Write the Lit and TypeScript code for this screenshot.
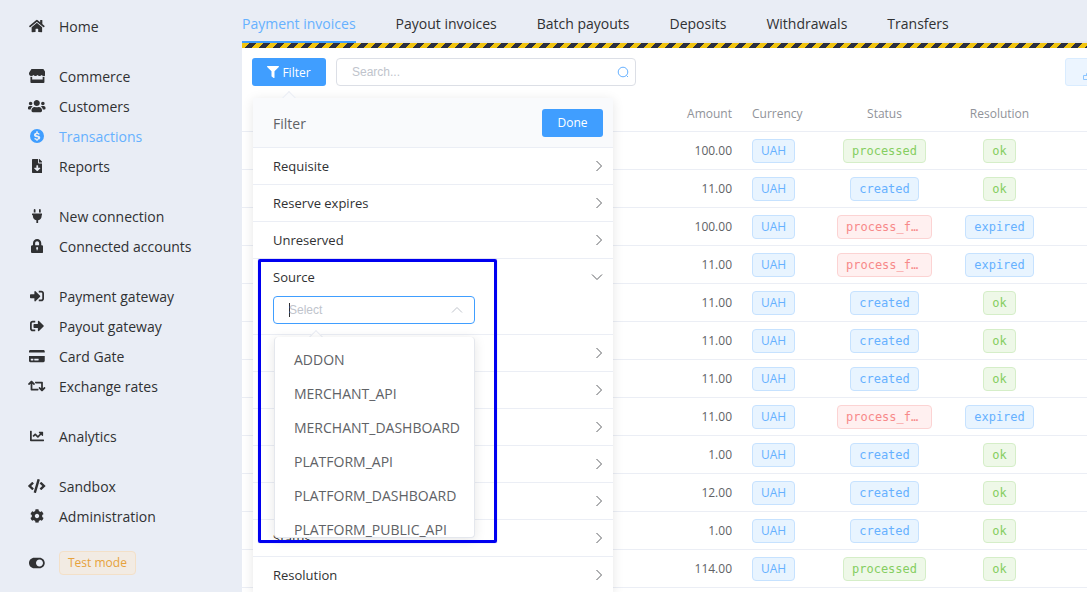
import { LitElement, html, css, svg } from 'lit';
import { customElement } from 'lit/decorators.js';

// FontAwesome style glyphs, [viewBox width, path]
const ICONS: Record<string, [number, string]> = {
  home: [576, 'M280.37 148.26L96 300.11V464a16 16 0 0 0 16 16l112.06-.29a16 16 0 0 0 15.92-16V368a16 16 0 0 1 16-16h64a16 16 0 0 1 16 16v95.64a16 16 0 0 0 16 16.05L464 480a16 16 0 0 0 16-16V300L295.67 148.26a12.19 12.19 0 0 0-15.3 0zM571.6 251.47L488 182.56V44.05a12 12 0 0 0-12-12h-56a12 12 0 0 0-12 12v72.61L318.47 43a48 48 0 0 0-61 0L4.34 251.47a12 12 0 0 0-1.6 16.9l25.5 31A12 12 0 0 0 45.15 301l235.22-193.74a12.19 12.19 0 0 1 15.3 0L530.9 301a12 12 0 0 0 16.9-1.6l25.5-31a12 12 0 0 0-1.7-16.93z'],
  store: [616, 'M602 118.6L537.1 15C531.3 5.7 521 0 510 0H106C95 0 84.7 5.7 78.9 15L14 118.6c-33.9 54.1-3.9 129.3 59.4 137.9 4.6.6 9.1.9 13.7.9 29.9 0 56.4-13.1 74.8-33.6 18.4 20.5 45 33.6 74.8 33.6 29.9 0 56.4-13.1 74.8-33.6 18.4 20.5 45 33.6 74.8 33.6 29.9 0 56.4-13.1 74.8-33.6 18.5 20.5 45 33.6 74.8 33.6 4.7 0 9.2-.3 13.7-.9 63.5-8.5 93.6-83.7 59.6-137.9zM529.5 288c-10 0-19.9-1.5-29.5-3.8V384H116v-99.8c-9.6 2.2-19.5 3.8-29.5 3.8-6 0-12.1-.4-18-1.2-5.6-.8-11.1-2.1-16.4-3.6V480c0 17.7 14.3 32 32 32h448c17.7 0 32-14.3 32-32V283.2c-5.4 1.6-10.8 2.9-16.4 3.6-6.1.8-12.1 1.2-18.2 1.2z'],
  users: [640, 'M96 224c35.3 0 64-28.7 64-64s-28.7-64-64-64-64 28.7-64 64 28.7 64 64 64zm448 0c35.3 0 64-28.7 64-64s-28.7-64-64-64-64 28.7-64 64 28.7 64 64 64zm32 32h-64c-17.6 0-33.5 7.1-45.1 18.6 40.3 22.1 68.9 62 75.1 109.4h66c17.7 0 32-14.3 32-32v-32c0-35.3-28.7-64-64-64zm-256 0c61.9 0 112-50.1 112-112S381.9 32 320 32 208 82.1 208 144s50.1 112 112 112zm76.8 32h-8.3c-20.8 10-43.9 16-68.5 16s-47.6-6-68.5-16h-8.3C179.6 288 128 339.6 128 403.2V432c0 26.5 21.5 48 48 48h288c26.5 0 48-21.5 48-48v-28.8c0-63.6-51.6-115.2-115.2-115.2zm-223.7-13.4C161.5 263.1 145.6 256 128 256H64c-35.3 0-64 28.7-64 64v32c0 17.7 14.3 32 32 32h65.9c6.3-47.4 34.9-87.3 75.2-109.4z'],
  file: [384, 'M224 136V0H24C10.7 0 0 10.7 0 24v464c0 13.3 10.7 24 24 24h336c13.3 0 24-10.7 24-24V160H248c-13.2 0-24-10.8-24-24zm76.45 211.36l-96.42 95.7c-6.65 6.61-17.39 6.61-24.04 0l-96.42-95.7C73.42 337.29 80.54 320 94.82 320H160v-80c0-8.84 7.16-16 16-16h32c8.84 0 16 7.16 16 16v80h65.18c14.28 0 21.4 17.29 11.27 27.36zM377 105L279.1 7c-4.5-4.5-10.6-7-17-7H256v128h128v-6.1c0-6.3-2.5-12.4-7-16.9z'],
  plug: [384, 'M320,32a32,32,0,0,0-64,0v96h64Zm48,128H16A16,16,0,0,0,0,176v32a16,16,0,0,0,16,16H32v32A160.07,160.07,0,0,0,160,412.8V512h64V412.8A160.07,160.07,0,0,0,352,256V224h16a16,16,0,0,0,16-16V176A16,16,0,0,0,368,160ZM128,32a32,32,0,0,0-64,0v96h64Z'],
  lock: [448, 'M400 224h-24v-72C376 68.2 307.8 0 224 0S72 68.2 72 152v72H48c-26.5 0-48 21.5-48 48v192c0 26.5 21.5 48 48 48h352c26.5 0 48-21.5 48-48V272c0-26.5-21.5-48-48-48zm-104 0H152v-72c0-39.7 32.3-72 72-72s72 32.3 72 72v72zM224 296a36 36 0 0 0-20 66v46h40v-46a36 36 0 0 0-20-66z'],
  signIn: [512, 'M416 448h-84c-6.6 0-12-5.4-12-12v-40c0-6.6 5.4-12 12-12h84c17.7 0 32-14.3 32-32V160c0-17.7-14.3-32-32-32h-84c-6.6 0-12-5.4-12-12V76c0-6.6 5.4-12 12-12h84c53 0 96 43 96 96v192c0 53-43 96-96 96zm-47-201L201 79c-15-15-41-4.5-41 17v96H24c-13.3 0-24 10.7-24 24v96c0 13.3 10.7 24 24 24h136v96c0 21.5 26 32 41 17l168-168c9.3-9.4 9.3-24.6 0-34z'],
  signOut: [512, 'M497 273L329 441c-15 15-41 4.5-41-17v-96H152c-13.3 0-24-10.7-24-24v-96c0-13.3 10.7-24 24-24h136V88c0-21.4 25.9-32 41-17l168 168c9.3 9.4 9.3 24.6 0 34zM192 436v-40c0-6.6-5.4-12-12-12H96c-17.7 0-32-14.3-32-32V160c0-17.7 14.3-32 32-32h84c6.6 0 12-5.4 12-12V76c0-6.6-5.4-12-12-12H96c-53 0-96 43-96 96v192c0 53 43 96 96 96h84c6.6 0 12-5.4 12-12z'],
  card: [576, 'M0 432c0 26.5 21.5 48 48 48h480c26.5 0 48-21.5 48-48V256H0v176zm192-68c0-6.6 5.4-12 12-12h136c6.6 0 12 5.4 12 12v40c0 6.6-5.4 12-12 12H204c-6.6 0-12-5.4-12-12v-40zm-128 0c0-6.6 5.4-12 12-12h72c6.6 0 12 5.4 12 12v40c0 6.6-5.4 12-12 12H76c-6.6 0-12-5.4-12-12v-40zM576 80v48H0V80c0-26.5 21.5-48 48-48h480c26.5 0 48 21.5 48 48z'],
  retweet: [640, 'M629.657 343.598L528.971 444.284c-9.373 9.372-24.568 9.372-33.941 0L394.343 343.598c-9.373-9.373-9.373-24.569 0-33.941l10.823-10.823c9.562-9.562 25.133-9.34 34.419.492L480 342.118V160H292.451a24.005 24.005 0 0 1-16.971-7.029l-16-16C244.361 121.851 255.069 96 276.451 96H520c13.255 0 24 10.745 24 24v222.118l40.416-42.792c9.285-9.831 24.856-10.054 34.419-.492l10.823 10.823c9.372 9.372 9.372 24.569-.001 33.941zm-265.138 15.431A23.999 23.999 0 0 0 347.548 352H160V169.881l40.416 42.792c9.286 9.831 24.856 10.054 34.419.491l10.822-10.822c9.373-9.373 9.373-24.569 0-33.941L144.971 67.716c-9.373-9.373-24.569-9.373-33.941 0L10.343 168.402c-9.373 9.373-9.373 24.569 0 33.941l10.822 10.822c9.562 9.562 25.133 9.34 34.419-.491L96 169.881V392c0 13.255 10.745 24 24 24h243.549c21.382 0 32.09-25.851 16.971-40.971l-16.001-16z'],
  chart: [512, 'M496 384H64V80c0-8.84-7.16-16-16-16H16C7.16 64 0 71.16 0 80v336c0 17.67 14.33 32 32 32h464c8.84 0 16-7.16 16-16v-32c0-8.84-7.16-16-16-16zM464 96H345.94c-21.38 0-32.09 25.85-16.97 40.97l32.4 32.4L288 242.75l-73.37-73.37c-12.5-12.5-32.76-12.5-45.25 0l-68.69 68.69c-6.25 6.25-6.25 16.38 0 22.63l22.62 22.62c6.25 6.25 16.38 6.25 22.63 0L192 237.25l73.37 73.37c12.5 12.5 32.76 12.5 45.25 0l96-96 32.4 32.4c15.12 15.12 40.97 4.41 40.97-16.97V112c.01-8.84-7.15-16-15.99-16z'],
  code: [640, 'M278.9 511.5l-61-17.7c-6.4-1.8-10-8.5-8.2-14.9L346.2 8.7c1.8-6.4 8.5-10 14.9-8.2l61 17.7c6.4 1.8 10 8.5 8.2 14.9L293.8 503.3c-1.9 6.4-8.5 10.1-14.9 8.2zm-114-112.2l43.5-46.4c4.6-4.9 4.3-12.7-.8-17.2L117 256l90.6-79.7c5.1-4.5 5.5-12.3.8-17.2l-43.5-46.4c-4.5-4.8-12.1-5.1-17-.5L3.8 247.2c-5.1 4.7-5.1 12.8 0 17.5l144.1 135.1c4.9 4.6 12.5 4.4 17-.5zm327.2.6l144.1-135.1c5.1-4.7 5.1-12.8 0-17.5L492.1 112.1c-4.8-4.5-12.4-4.3-17 .5L431.6 159c-4.6 4.9-4.3 12.7.8 17.2L523 256l-90.6 79.7c-5.1 4.5-5.5 12.3-.8 17.2l43.5 46.4c4.5 4.9 12.1 5.1 17 .6z'],
  cog: [512, 'M487.4 315.7l-42.6-24.6c4.3-23.2 4.3-47 0-70.2l42.6-24.6c4.9-2.8 7.1-8.6 5.5-14-11.1-35.6-30-67.8-54.7-94.6-3.8-4.1-10-5.1-14.8-2.3L380.8 110c-17.9-15.4-38.5-27.3-60.8-35.1V25.8c0-5.6-3.9-10.5-9.4-11.7-36.7-8.2-74.3-7.8-109.2 0-5.5 1.2-9.4 6.1-9.4 11.7V75c-22.2 7.9-42.8 19.8-60.8 35.1L88.7 85.5c-4.9-2.8-11-1.9-14.8 2.3-24.7 26.7-43.6 58.9-54.7 94.6-1.7 5.4.6 11.2 5.5 14L67.3 221c-4.3 23.2-4.3 47 0 70.2l-42.6 24.6c-4.9 2.8-7.1 8.6-5.5 14 11.1 35.6 30 67.8 54.7 94.6 3.8 4.1 10 5.1 14.8 2.3l42.6-24.6c17.9 15.4 38.5 27.3 60.8 35.1v49.2c0 5.6 3.9 10.5 9.4 11.7 36.7 8.2 74.3 7.8 109.2 0 5.5-1.2 9.4-6.1 9.4-11.7v-49.2c22.2-7.9 42.8-19.8 60.8-35.1l42.6 24.6c4.9 2.8 11 1.9 14.8-2.3 24.7-26.7 43.6-58.9 54.7-94.6 1.5-5.5-.7-11.3-5.6-14.1zM256 336c-44.1 0-80-35.9-80-80s35.9-80 80-80 80 35.9 80 80-35.9 80-80 80z'],
  toggle: [576, 'M384 64H192C86 64 0 150 0 256s86 192 192 192h192c106 0 192-86 192-192S490 64 384 64zm0 320c-70.8 0-128-57.3-128-128 0-70.8 57.3-128 128-128 70.8 0 128 57.3 128 128 0 70.8-57.3 128-128 128z'],
  filter: [512, 'M487.976 0H24.028C2.71 0-8.047 25.866 7.058 40.971L192 225.941V432c0 7.831 3.821 15.17 10.237 19.662l80 55.98C298.02 518.69 320 507.493 320 487.98V225.941l184.947-184.97C520.021 25.896 509.338 0 487.976 0z'],
  dollar: [512, 'M256 0a256 256 0 1 0 0 512 256 256 0 0 0 0-512zm28 397v31h-56v-31c-38-3-69-22-78-52l52-16c5 15 21 24 40 24h26c17 0 28-10 28-24 0-12-8-19-25-24l-63-17c-37-10-62-35-62-72 0-38 32-69 82-75V84h56v57c36 4 64 24 74 52l-52 16c-5-14-19-22-36-22h-22c-17 0-26 9-26 21 0 10 7 16 22 20l66 18c40 11 64 36 64 76 0 40-33 70-90 75z'],
};

const icon = (name: string, size = 14, color = 'currentColor') => {
  const [w, d] = ICONS[name];
  return html`<svg width=${(w / 512) * size} height=${size} viewBox="0 0 ${w} 512" fill=${color} fill-rule="evenodd">${svg`<path d=${d}></path>`}</svg>`;
};

const chevron = (dir: 'right' | 'down' | 'up', color = '#606266') => {
  const pts = { right: 'M1.5 1l5 5-5 5', down: 'M1 1.5l5 5 5-5', up: 'M1 6.5l5-5 5 5' }[dir];
  const [w, h] = dir === 'right' ? [8, 12] : [12, 8];
  return html`<svg width=${w} height=${h} viewBox="0 0 ${w} ${h}" fill="none" stroke=${color} stroke-width="1">${svg`<path d=${pts}></path>`}</svg>`;
};

const NAV = [
  [['home', 'Home']],
  [['store', 'Commerce'], ['users', 'Customers'], ['dollar', 'Transactions'], ['file', 'Reports']],
  [['plug', 'New connection'], ['lock', 'Connected accounts']],
  [['signIn', 'Payment gateway'], ['signOut', 'Payout gateway'], ['card', 'Card Gate'], ['retweet', 'Exchange rates']],
  [['chart', 'Analytics']],
  [['code', 'Sandbox'], ['cog', 'Administration']],
];

const TABS = ['Payment invoices', 'Payout invoices', 'Batch payouts', 'Deposits', 'Withdrawals', 'Transfers'];

const ROWS: [string, string, string][] = [
  ['100.00', 'processed', 'ok'],
  ['11.00', 'created', 'ok'],
  ['100.00', 'process_failed', 'expired'],
  ['11.00', 'process_failed', 'expired'],
  ['11.00', 'created', 'ok'],
  ['11.00', 'created', 'ok'],
  ['11.00', 'created', 'ok'],
  ['11.00', 'process_failed', 'expired'],
  ['1.00', 'created', 'ok'],
  ['12.00', 'created', 'ok'],
  ['1.00', 'created', 'ok'],
  ['114.00', 'processed', 'ok'],
];

const TONE: Record<string, string> = {
  processed: 'green',
  ok: 'green',
  created: 'blue',
  expired: 'blue',
  process_failed: 'red',
};

const OPTIONS = ['ADDON', 'MERCHANT_API', 'MERCHANT_DASHBOARD', 'PLATFORM_API', 'PLATFORM_DASHBOARD', 'PLATFORM_PUBLIC_API'];

@customElement('app-root')
export class AppRoot extends LitElement {
  static styles = css`
    :host {
      display: flex;
      position: relative;
      width: 1087px;
      height: 592px;
      overflow: hidden;
      background: #e9edf5;
      font-family: 'Open Sans', sans-serif;
      color: #303133;
    }

    .sidebar {
      flex: 0 0 242px;
      padding-top: 11px;
      box-sizing: border-box;
    }
    .group {
      margin-bottom: 20px;
    }
    .item {
      display: flex;
      align-items: center;
      height: 30px;
      font-size: 14px;
    }
    .item.active {
      color: #66b1ff;
    }
    .item.active svg {
      color: #409eff;
    }
    .item.mode {
      height: 24px;
      margin-top: 1px;
    }
    .ico {
      flex: 0 0 18px;
      margin: 0 13px 0 28px;
      display: flex;
      justify-content: center;
      align-items: center;
    }
    .test {
      height: 24px;
      line-height: 22px;
      box-sizing: border-box;
      padding: 0 8px;
      font-size: 12px;
      color: #e6a23c;
      background: #f2ebe3;
      border: 1px solid #f3e0c8;
      border-radius: 4px;
    }

    .content {
      flex: 1;
      min-width: 0;
      display: flex;
      flex-direction: column;
    }
    .tabs {
      display: flex;
      height: 43px;
      box-sizing: border-box;
      box-shadow: inset 0 -2px 0 #e4e7ed;
    }
    .tab {
      margin-right: 40px;
      height: 43px;
      line-height: 48px;
      box-sizing: border-box;
      font-size: 14px;
    }
    .tab.active {
      color: #66b1ff;
      border-bottom: 2px solid #409eff;
    }
    .stripe {
      height: 5px;
      background: repeating-linear-gradient(135deg, #f1c40f 0 4.95px, #2c3040 4.95px 9.9px);
    }

    .main {
      position: relative;
      flex: 1;
      background: #fff;
      overflow: hidden;
    }
    .toolbar {
      display: flex;
      gap: 10px;
      padding: 10px 10px 8px;
    }
    .btn {
      height: 28px;
      box-sizing: border-box;
      display: flex;
      align-items: center;
      justify-content: center;
      gap: 3px;
      background: #409eff;
      color: #fff;
      font-size: 12px;
      border-radius: 3px;
    }
    .btn.filter {
      width: 74px;
    }
    .search {
      width: 300px;
      height: 28px;
      box-sizing: border-box;
      display: flex;
      align-items: center;
      justify-content: space-between;
      padding: 0 5px 0 15px;
      border: 1px solid #dcdfe6;
      border-radius: 4px;
      font: 12px 'Liberation Sans', sans-serif;
      color: #c0c4cc;
    }
    .export {
      flex: 0 0 60px;
      margin: 0 -48px 0 auto;
      height: 28px;
      box-sizing: border-box;
      padding: 6px 0 0 16px;
      background: #ecf5ff;
      border: 1px solid #d9ecff;
      border-radius: 3px;
    }

    .row {
      display: grid;
      grid-template-columns: 500px 82px 121px 109px 1fr;
      align-items: center;
      height: 38px;
      box-sizing: border-box;
      border-bottom: 1px solid #ebeef5;
      font-size: 12px;
      color: #606266;
    }
    .row.head {
      padding-top: 1px;
      color: #909399;
      font-weight: 500;
    }
    .amount {
      text-align: right;
      padding-right: 10px;
    }
    .currency {
      display: flex;
      padding-left: 10px;
    }
    .mid {
      display: flex;
      justify-content: center;
    }
    .tag {
      display: inline-block;
      height: 24px;
      line-height: 22px;
      box-sizing: border-box;
      padding: 0 8px;
      border: 1px solid;
      border-radius: 4px;
      white-space: nowrap;
      overflow: hidden;
      text-overflow: ellipsis;
      font-size: 12px;
    }
    .tag.code {
      font-family: 'DejaVu Sans Mono', monospace;
      max-width: 95px;
    }
    .tag.blue {
      color: #66b1ff;
      background: #e8f4ff;
      border-color: #c6e2ff;
    }
    .tag.green {
      color: #85ce61;
      background: #eef8e8;
      border-color: #d5eec8;
    }
    .tag.red {
      color: #f78989;
      background: #fff0f0;
      border-color: #fcd3d3;
    }

    .popover {
      position: absolute;
      left: 11px;
      top: 50px;
      width: 360px;
      background: #fff;
      box-shadow: 0 2px 12px rgba(0, 0, 0, 0.1);
      border-radius: 2px;
    }
    .popover::before {
      content: '';
      position: absolute;
      left: 31px;
      top: -5px;
      width: 10px;
      height: 10px;
      box-sizing: border-box;
      background: #f9fafc;
      border: 1px solid #ebeef5;
      border-right: 0;
      border-bottom: 0;
      transform: rotate(45deg);
    }
    .pop-head {
      position: relative;
      display: flex;
      align-items: center;
      justify-content: space-between;
      height: 50px;
      box-sizing: border-box;
      padding: 0 10px 0 20px;
      background: #f9fafc;
      border-bottom: 1px solid #ebeef5;
      font-size: 14px;
      color: #606266;
    }
    .pop-title {
      padding-top: 2px;
    }
    .btn.done {
      width: 61px;
    }
    .section {
      border-bottom: 1px solid #ebeef5;
      padding: 0 10px 0 20px;
      font-size: 13px;
    }
    .section-head {
      display: flex;
      align-items: center;
      justify-content: space-between;
      height: 36px;
    }
    .select {
      display: flex;
      align-items: center;
      justify-content: space-between;
      width: 202px;
      height: 28px;
      box-sizing: border-box;
      margin: 1px 0 10px;
      padding: 0 11px 0 15px;
      border: 1px solid #409eff;
      border-radius: 4px;
      font: 12px 'Liberation Sans', sans-serif;
      color: #c0c4cc;
    }
    .caret {
      display: inline-block;
      width: 1px;
      height: 14px;
      margin-right: -1px;
      background: #303133;
      vertical-align: -3px;
    }
    .dropdown {
      position: absolute;
      left: 21px;
      top: 239px;
      width: 201px;
    }
    .dropdown::before {
      content: '';
      position: absolute;
      left: 37px;
      top: -5px;
      width: 10px;
      height: 10px;
      box-sizing: border-box;
      background: #fff;
      border: 1px solid #ebeef5;
      border-right: 0;
      border-bottom: 0;
      transform: rotate(45deg);
    }
    .options {
      position: relative;
      height: 201px;
      box-sizing: border-box;
      padding: 6px 0;
      overflow: hidden;
      background: #fff;
      border: 1px solid #e4e7ed;
      border-top: 0;
      border-radius: 4px;
      box-shadow: 0 2px 12px rgba(0, 0, 0, 0.1);
    }
    .option {
      height: 34px;
      line-height: 34px;
      padding-left: 19px;
      font-size: 14px;
      color: #606266;
      white-space: nowrap;
    }

    .highlight {
      position: absolute;
      left: 258px;
      top: 259px;
      width: 239px;
      height: 284px;
      box-sizing: border-box;
      border: 3px solid #0000f0;
      border-radius: 2px;
      box-shadow: 0 0 1px rgba(0, 0, 240, 0.5);
      pointer-events: none;
    }
  `;

  private renderSection(label: string) {
    return html`<div class="section">
      <div class="section-head"><span>${label}</span>${chevron('right')}</div>
    </div>`;
  }

  render() {
    return html`
      <aside class="sidebar">
        ${NAV.map(
          (group) => html`<div class="group">
            ${group.map(
              ([ic, label]) => html`<div class="item ${label === 'Transactions' ? 'active' : ''}">
                <span class="ico">${icon(ic)}</span>${label}
              </div>`
            )}
          </div>`
        )}
        <div class="item mode">
          <span class="ico">${icon('toggle')}</span>
          <span class="test">Test mode</span>
        </div>
      </aside>

      <section class="content">
        <nav class="tabs">
          ${TABS.map((t, i) => html`<div class="tab ${i === 0 ? 'active' : ''}">${t}</div>`)}
        </nav>
        <div class="stripe"></div>
        <div class="main">
          <div class="toolbar">
            <div class="btn filter">${icon('filter', 12, '#fff')}Filter</div>
            <div class="search">
              Search...
              <svg width="13" height="13" viewBox="0 0 13 13" fill="none" stroke="#66b1ff" stroke-width="1">
                <circle cx="6" cy="6" r="4.8"></circle>
                <path d="M9.5 9.5l1.5 1.5"></path>
              </svg>
            </div>
            <div class="export">
              <svg width="14" height="14" viewBox="0 0 14 14" fill="none" stroke="#8cc5ff" stroke-width="1">
                <path d="M7 1v4M4.5 7.5V5.5h5v2M1.5 7.5h11v4h-11z"></path>
              </svg>
            </div>
          </div>

          <div class="row head">
            <div class="amount">Amount</div>
            <div class="currency">Currency</div>
            <div class="mid">Status</div>
            <div class="mid">Resolution</div>
          </div>
          ${ROWS.map(
            ([amount, status, resolution]) => html`<div class="row">
              <div class="amount">${amount}</div>
              <div class="currency"><span class="tag blue">UAH</span></div>
              <div class="mid"><span class="tag code ${TONE[status]}">${status}</span></div>
              <div class="mid"><span class="tag code ${TONE[resolution]}">${resolution}</span></div>
            </div>`
          )}

          <div class="popover">
            <div class="pop-head"><span class="pop-title">Filter</span><div class="btn done">Done</div></div>
            ${this.renderSection('Requisite')}
            ${this.renderSection('Reserve expires')}
            ${this.renderSection('Unreserved')}
            <div class="section">
              <div class="section-head"><span>Source</span>${chevron('down')}</div>
              <div class="select">
                <span><i class="caret"></i>Select</span>
                ${chevron('up', '#c0c4cc')}
              </div>
            </div>
            ${this.renderSection('')}
            ${this.renderSection('')}
            ${this.renderSection('')}
            ${this.renderSection('')}
            ${this.renderSection('')}
            ${this.renderSection('Status')}
            ${this.renderSection('Resolution')}
            <div class="dropdown">
              <div class="options">
                ${OPTIONS.map((o) => html`<div class="option">${o}</div>`)}
              </div>
            </div>
          </div>
        </div>
      </section>

      <div class="highlight"></div>
    `;
  }
}

declare global {
  interface HTMLElementTagNameMap {
    'app-root': AppRoot;
  }
}
